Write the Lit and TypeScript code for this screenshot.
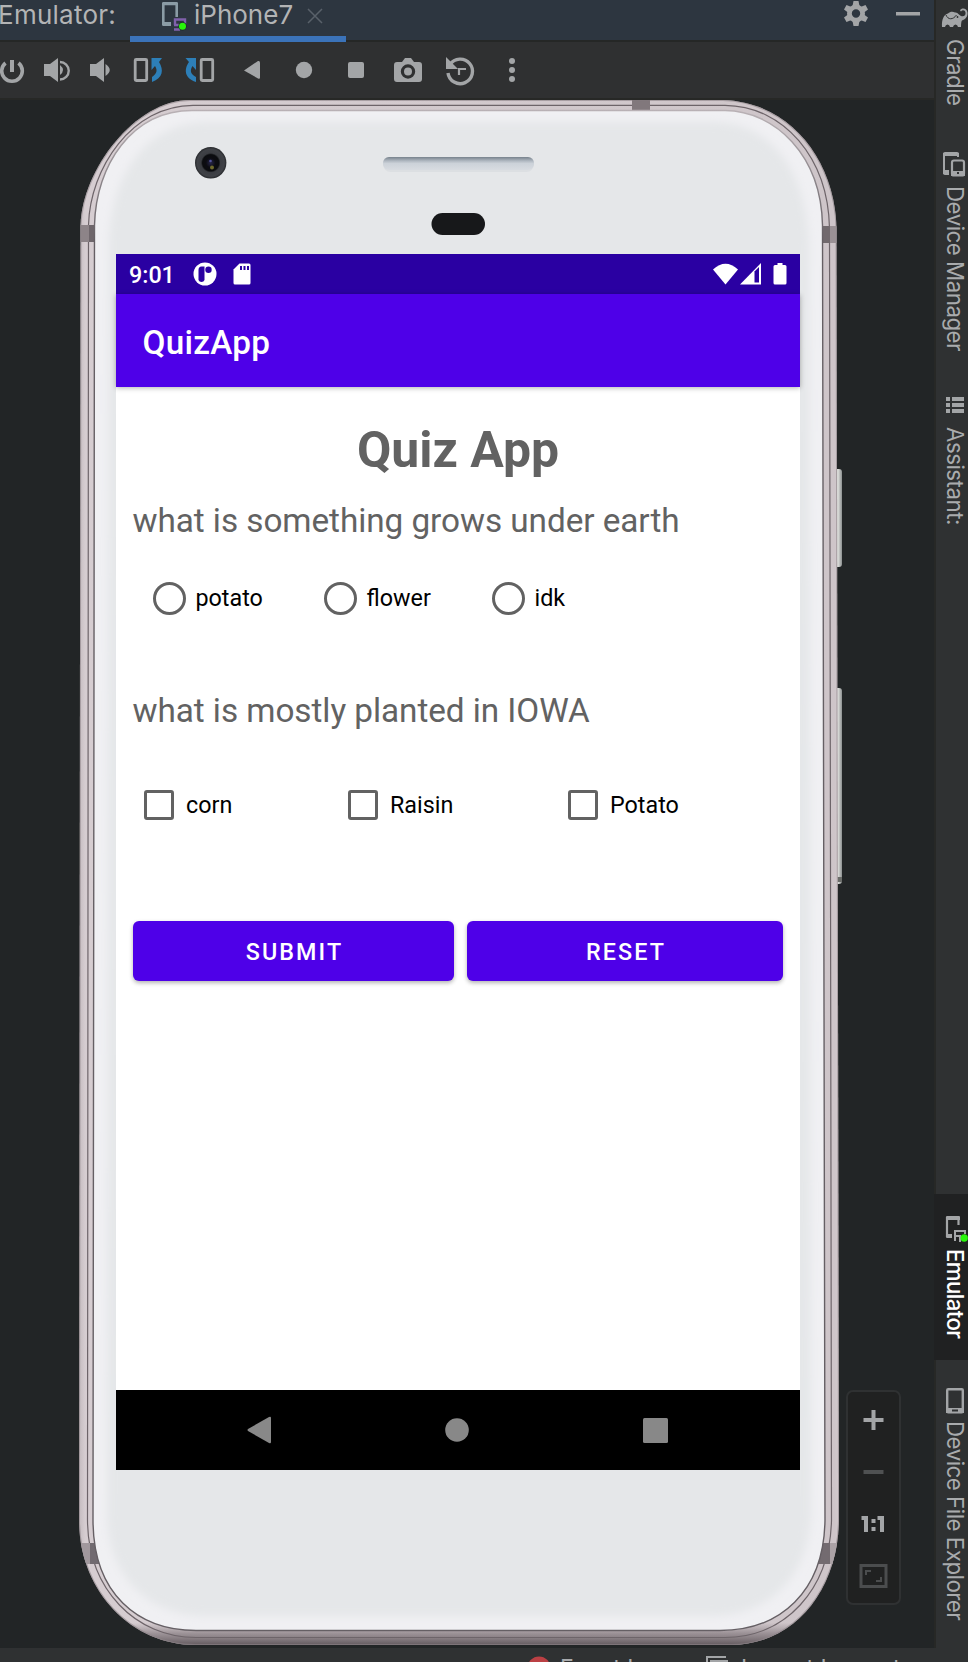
import { LitElement, html, css, svg } from "lit";
import { customElement } from "lit/decorators.js";

const glyph = (w: number, h: number, body: unknown) => html`<svg class="glyph" width=${w} height=${h} viewBox="0 0 ${w} ${h}">${body}</svg>`;

const BODY = "M190 100 H723 C790 102 835 160 836.500 228 L839 1490 V1520 C838 1590 795 1645 730 1645 H196 C130 1645 79 1590 79 1520 V1480 L80.500 225 C82 170 135 100 190 100 Z";
const FACE = "M192 110.500 H725 C775 111 821 155 822.500 225 L825 1520 C824 1592 780 1630.500 720 1630.500 H196 C138 1630.500 93 1594 93 1520 L94.500 225 C96 165 132 110.500 192 110.500 Z";

@customElement("phone-shell")
export class PhoneShell extends LitElement {
  static styles = css`
    :host { display: block; }
    svg { display: block; }
  `;
  render() {
    return html`<svg width="770" height="1550" viewBox="76 96 770 1550">
      <defs>
        <linearGradient id="side" x1="0" x2="1" y1="0" y2="0">
          <stop offset="0" stop-color="#a2989d"/><stop offset=".006" stop-color="#c9c0c4"/><stop offset=".012" stop-color="#d6cdd1"/>
          <stop offset=".985" stop-color="#cec5c9"/><stop offset=".993" stop-color="#d4cbce"/><stop offset="1" stop-color="#a0969b"/>
        </linearGradient>
        <linearGradient id="low" x1="0" x2="0" y1="0" y2="1">
          <stop offset="0" stop-color="#8f858a" stop-opacity=".5"/><stop offset=".004" stop-color="#cfc6ca" stop-opacity="0"/>
          <stop offset=".985" stop-color="#8a7f84" stop-opacity="0"/><stop offset=".992" stop-color="#83797e" stop-opacity=".7"/><stop offset="1" stop-color="#5d5459"/>
        </linearGradient>
        <linearGradient id="rim" gradientUnits="userSpaceOnUse" x1="0" x2="0" y1="110" y2="240">
          <stop offset="0" stop-color="#b9b1b5"/><stop offset=".2" stop-color="#a9a2a6"/><stop offset="1" stop-color="#655f64"/>
        </linearGradient>
        <linearGradient id="slot" x1="0" x2="0" y1="0" y2="1">
          <stop offset="0" stop-color="#77828c"/><stop offset=".3" stop-color="#b0b8c1"/><stop offset=".5" stop-color="#ccd2d9"/><stop offset="1" stop-color="#d8dce1"/>
        </linearGradient>
        <linearGradient id="key" x1="0" x2="1" y1="0" y2="0">
          <stop offset="0" stop-color="#a2a4a4"/><stop offset=".5" stop-color="#dedfdc"/><stop offset="1" stop-color="#8c9090"/>
        </linearGradient>
        <radialGradient id="lens"><stop offset="0" stop-color="#27264a"/><stop offset=".3" stop-color="#0c0c12"/><stop offset=".52" stop-color="#0b0c0f"/><stop offset=".62" stop-color="#3b3d42"/><stop offset=".86" stop-color="#404247"/><stop offset="1" stop-color="#26282b"/></radialGradient>
        <clipPath id="body"><path d=${BODY}/></clipPath>
        <clipPath id="face"><path d=${FACE}/></clipPath>
        <filter id="soft" x="-5%" y="-5%" width="110%" height="110%"><feGaussianBlur stdDeviation="4"/></filter>
      </defs>
      <rect x="834" y="469" width="8" height="98" rx="3" fill="url(#key)"/>
      <rect x="834" y="688" width="8" height="196" rx="3" fill="url(#key)"/>
      <rect x="836" y="877" width="6" height="5" fill="#6a6c69"/>
      <g clip-path="url(#body)">
        <rect x="76" y="96" width="770" height="1550" fill="url(#side)"/>
        <rect x="76" y="96" width="770" height="1550" fill="url(#low)"/>
        <path d=${BODY} fill="none" stroke="#8d8388" stroke-width="2" opacity=".6"/>
        <path d="M193 105.300 H725 C784 106 828 158 829.500 228 L831.500 1520 C830 1590 785 1637.500 725 1637.500 H196 C136 1637.500 88 1590 87.500 1520 L88.500 225 C90 168 132 105.300 193 105.300 Z" fill="none" stroke="#6d6469" stroke-width="1.200"/>
        <rect x="76" y="225" width="20" height="17" fill="#8d8488"/>
        <rect x="89" y="225" width="7" height="17" fill="#6e666b"/>
        <rect x="822" y="226" width="18" height="17" fill="#9a9195"/>
        <rect x="822" y="226" width="8" height="17" fill="#71696d"/>
        <rect x="632" y="98" width="18" height="12" fill="#81787c"/>
        <rect x="76" y="1543" width="24" height="21" fill="#a1989d"/>
        <rect x="90" y="1543" width="10" height="21" fill="#716a70"/>
        <rect x="818" y="1543" width="24" height="21" fill="#aba2a6"/>
        <rect x="818" y="1543" width="12" height="21" fill="#736b70"/>
      </g>
      <path d=${FACE} fill="#f0f0f3" stroke="url(#rim)" stroke-width="1.400"/>
      <g clip-path="url(#face)">
        <path d="M205 122 H715 C775 124 807 175 809 245 L811 1515 C808 1578 768 1616 712 1616 H205 C150 1616 108 1578 107 1515 L109 240 C112 175 145 124 205 122 Z" fill="#e5e7e9" filter="url(#soft)"/>
      </g>
      <circle cx="210.700" cy="162.800" r="15.700" fill="url(#lens)"/>
      <circle cx="212" cy="167.500" r="2" fill="#6e6a2c"/>
      <circle cx="210.500" cy="161" r="1.300" fill="#53549a"/>
      <rect x="383" y="157" width="151" height="15" rx="7.500" fill="#dcdfe2"/>
      <rect x="383" y="157" width="151" height="13" rx="6" fill="url(#slot)"/>
      <rect x="431.500" y="213" width="53.500" height="22" rx="11" fill="#17181a"/>
    </svg>`;
  }
}

@customElement("quiz-screen")
export class QuizScreen extends LitElement {
  static styles = css`
    :host { display: flex; flex-direction: column; width: 684px; height: 1216px; background: #fff; font-family: Roboto, sans-serif; color: #000; }
    .status { display: flex; align-items: center; height: 40px; background: #2a00a2; color: #fff; padding: 0 13px 0 13px; box-sizing: border-box; }
    .time { font-size: 23.300px; font-weight: 500; width: 64px; padding-top: 2px; }
    .glyph { display: block; flex: none; }
    .grow { flex: 1; }
    .sd { margin-left: 16px; }
    .wifi { margin-right: 2px; }
    .cell { margin-right: 12px; }
    .bar { display: flex; align-items: center; height: 93px; padding: 3px 26.500px 0; box-sizing: border-box; background: #4e00e8; color: #fff; font-size: 33.300px; letter-spacing: .250px; font-weight: 500; box-shadow: 0 1px 5px rgba(0,0,0,.3); }
    .page { flex: 1; display: flex; flex-direction: column; padding: 0 17px; }
    .title { margin-top: 34px; height: 58px; line-height: 58px; text-align: center; font-size: 49.900px; font-weight: 700; color: #626262; }
    .q { height: 40px; line-height: 40px; font-size: 33.300px; letter-spacing: -.050px; margin-left: -.500px; color: #626262; white-space: nowrap; }
    .q1 { margin-top: 22px; }
    .q2 { margin-top: 73px; }
    .radios { display: flex; height: 40px; margin-top: 37px; padding-left: 19.500px; }
    .checks { display: flex; height: 40px; margin-top: 54px; padding-left: 11px; }
    .opt { display: flex; align-items: center; font-size: 23.300px; line-height: 40px; }
    .ring { width: 33px; height: 33px; box-sizing: border-box; border: 3.300px solid #626262; border-radius: 50%; margin-right: 10px; }
    .box { width: 30px; height: 30px; box-sizing: border-box; border: 3px solid #626262; border-radius: 3px; margin-right: 12px; }
    .r1 { width: 171px; } .r2 { width: 168px; }
    .c1 { width: 204px; } .c2 { width: 220px; }
    .buttons { display: grid; grid-template-columns: 321px 316px; gap: 13px; margin-top: 96px; }
    .btn { height: 60px; border: 0; padding: 2px 0 0 2px; border-radius: 6px; background: #4e00e8; color: #fff; font: 500 23.300px Roboto, sans-serif; letter-spacing: 2.080px; box-shadow: 0 2px 4px rgba(0,0,0,.3); }
    .nav { height: 80px; background: #000; display: flex; align-items: center; padding: 0 132px 0 131px; justify-content: space-between; }
  `;
  render() {
    return html`
      <div class="status">
        <span class="time">9:01</span>
        ${glyph(24, 24, svg`<circle cx="12" cy="12" r="11.500" fill="#fff"/><path d="M8.500 4.500H11.500V18A3.200 3.200 0 0 1 5.500 18V8Q5.500 4.500 8.500 4.500Z" fill="#2a00a2"/><circle cx="15.500" cy="7.800" r="3.200" fill="#2a00a2"/>`)}
        <span class="sd">${glyph(18, 22, svg`<path d="M6.500 .5H16Q17.500 .5 17.500 2V20Q17.500 21.500 16 21.500H2Q.5 21.500 .5 20V6.500Z" fill="#fff"/><path d="M7 3h2v4H7zM10.500 3h2v4h-2zM14 3h2v4h-2z" fill="#2a00a2"/>`)}</span>
        <span class="grow"></span>
        <span class="wifi">${glyph(25, 22, svg`<path d="M0 6.500Q12.500-5 25 6.500L12.500 21.500Z" fill="#fff"/>`)}</span>
        <span class="cell">${glyph(21, 22, svg`<path d="M21 0V21.500H0Z" fill="#fff"/><path d="M14.500 8.500L19 4V19.500H14.500Z" fill="#2a00a2"/>`)}</span>
        ${glyph(14, 22, svg`<path d="M4.500 0H9.500V2H12Q13.500 2 13.500 3.500V20Q13.500 21.500 12 21.500H2Q.5 21.500 .5 20V3.500Q.5 2 2 2H4.500Z" fill="#fff"/>`)}
      </div>
      <div class="bar">QuizApp</div>
      <div class="page">
        <div class="title">Quiz App</div>
        <div class="q q1">what is something grows under earth</div>
        <div class="radios">
          <label class="opt r1"><span class="ring"></span>potato</label>
          <label class="opt r2"><span class="ring"></span>flower</label>
          <label class="opt"><span class="ring"></span>idk</label>
        </div>
        <div class="q q2">what is mostly planted in IOWA</div>
        <div class="checks">
          <label class="opt c1"><span class="box"></span>corn</label>
          <label class="opt c2"><span class="box"></span>Raisin</label>
          <label class="opt"><span class="box"></span>Potato</label>
        </div>
        <div class="buttons"><button class="btn">SUBMIT</button><button class="btn">RESET</button></div>
      </div>
      <div class="nav">
        ${glyph(24, 28, svg`<path d="M22 1Q24 0 24 2V26Q24 28 22 27L1 15Q0 14 1 13Z" fill="#888"/>`)}
        ${glyph(24, 24, svg`<circle cx="12" cy="12" r="11.800" fill="#888"/>`)}
        ${glyph(25, 25, svg`<rect width="25" height="25" rx="1.500" fill="#888"/>`)}
      </div>`;
  }
}

@customElement("app-root")
export class AppRoot extends LitElement {
  static styles = css`
    :host { display: grid; grid-template-columns: 934px 34px; grid-template-rows: 1648px 14px; width: 968px; height: 1662px; overflow: hidden; background: #2f3132; font-family: Inter, sans-serif; color: #a9abad; }
    .glyph { display: block; flex: none; }
    .main { display: flex; flex-direction: column; background: #222526; overflow: hidden; }
    .head { display: flex; height: 42px; box-sizing: border-box; background: #2d3640; border-bottom: 2px solid #252726; font-size: 26px; color: #b3b4b5; }
    .name { width: 132px; height: 30px; line-height: 30px; margin-left: -2px; letter-spacing: .250px; }
    .tab { width: 216px; height: 42px; box-sizing: border-box; display: flex; padding-left: 32px; border-bottom: 6px solid #3b73b9; line-height: 30px; }
    .label { width: 113px; margin-left: 7px; white-space: nowrap; }
    .close { padding-top: 8px; }
    .grow { flex: 1; }
    .gear { padding-top: 1px; margin-right: 28px; }
    .minus { padding-top: 12px; margin-right: 14px; }
    .tools { height: 58px; box-sizing: border-box; background: #2f3031; border-bottom: 2px solid #272826; display: flex; align-items: flex-start; }
    .stage { flex: 1; display: grid; grid-template-columns: 846px 55px; }
    .device { display: grid; padding-left: 76px; }
    .device > * { grid-area: 1 / 1; }
    .shell { margin-top: -4px; }
    .screen { margin: 154px 0 0 40px; }
    .zoom { width: 55px; height: 215px; box-sizing: border-box; border: 2px solid #2f3132; border-radius: 7px; background: #202121; margin-top: 1290px; }
    .rail { background: #2f3132; border-left: 2px solid #272826; display: flex; flex-direction: column; }
    .item { display: flex; flex-direction: column; align-items: flex-start; padding-left: 5px; box-sizing: border-box; }
    .side { writing-mode: vertical-rl; font-size: 22.300px; letter-spacing: -.500px; line-height: 26px; white-space: nowrap; margin-left: 1px; }
    .i1 { height: 151px; padding-top: 6px; } .i1 .side { margin-top: 9px; }
    .i2 { height: 244px; } .i2 .side { margin-top: 7px; }
    .i3 { height: 799px; } .i3 .side { margin-top: 12px; }
    .i4 { height: 166px; padding-top: 20px; margin-left: -2px; padding-left: 7px; background: #202122; color: #fff; } .i4 .side { margin-top: 7px; font-weight: 500; letter-spacing: -.650px; }
    .i5 { flex: 1; padding-top: 27px; } .i5 .side { margin-top: 6px; }
    .foot { grid-column: 1 / 3; display: flex; box-sizing: border-box; padding: 8px 0 0 527px; font-size: 23px; line-height: 24px; overflow: hidden; }
    .foot span { white-space: nowrap; }
    .ev { width: 146px; margin-left: 9px; }
    .li { margin-left: 11px; }
  `;

  private toolbar() {
    return glyph(540, 56, svg`
      <g fill="none" stroke="#a3a5a7">
        <path d="M5.500 21A10.300 10.300 0 1 0 18.500 21" stroke-width="3.600"/><path d="M12 18V30" stroke-width="4"/>
        <path d="M60 20A8.600 8.600 0 0 1 60 37.500" stroke-width="2.400"/>
        <rect x="135.200" y="17.500" width="11.500" height="21" rx="1" stroke-width="2.800"/>
        <rect x="201.200" y="17.500" width="11.500" height="21" rx="1" stroke-width="2.800"/>
        <path d="M450 22.500A12.300 12.300 0 1 1 448 31" stroke-width="3.400"/><path d="M466 27H459V33" stroke-width="2.200"/>
      </g>
      <g fill="#a3a5a7">
        <path d="M44 22H50L58 16V40L50 34H44ZM60 23Q66 28 60 33Z"/>
        <path d="M90 22H96L104 16V40L96 34H90ZM105.500 22Q114 28 105.500 34Z"/>
        <path d="M258 19Q260 18.500 260 20.500V35.500Q260 37.500 258 36.500L244 28.500Z"/>
        <circle cx="304" cy="28" r="8.200"/><rect x="348" y="20" width="16" height="16" rx="2"/>
        <path d="M397 20H402L405 16H411L414 20H419Q422 20 422 23V37Q422 40 419 40H397Q394 40 394 37V23Q394 20 397 20Z"/>
        <path d="M446 15L446 27L458 27Z"/>
        <circle cx="512" cy="19" r="3"/><circle cx="512" cy="28" r="3"/><circle cx="512" cy="37" r="3"/>
      </g>
      <circle cx="408" cy="29.500" r="5.600" fill="none" stroke="#2f3031" stroke-width="3.200"/>
      <g fill="#2d7fb8"><path d="M151.500 16H162L159 20C164 28 163 36 152 40V35C158 31 157 27 155 24L151.500 28Z"/><path d="M185.500 16H196V28L192.500 24C190 28 190 32 196 35V40C184 36 184 27 189 20Z"/></g>`);
  }

  private zoomPanel() {
    return glyph(51, 211, svg`
      <path d="M25.500 18V38M15.500 28H35.500" stroke="#a3a5a7" stroke-width="4"/>
      <path d="M15.500 80H35.500" stroke="#4f5152" stroke-width="4"/>
      <g fill="#a3a5a7"><path d="M13.500 124H20V140H16V128H13.500ZM29.500 124H36V140H32V128H29.500ZM23.500 127H27.500V131H23.500ZM23.500 135H27.500V139H23.500Z"/></g>
      <rect x="13" y="173.500" width="25" height="21" fill="none" stroke="#4b4d4e" stroke-width="3"/>
      <path d="M18 183V179H23M33 185V189H28" fill="none" stroke="#4b4d4e" stroke-width="2"/>`);
  }

  render() {
    return html`
      <div class="main">
        <div class="head">
          <div class="name">Emulator:</div>
          <div class="tab">
            ${glyph(25, 32, svg`<path d="M14.700 17V4H1.300V24H9" fill="none" stroke="#8b9ca6" stroke-width="2.600"/><path d="M1 2h14l1 1v2H0V3zM0 22h9v4H1L0 25z" fill="#8b9ca6"/><path d="M13 25V19.500H23V24M12 29.500H18M12 25H18" fill="none" stroke="#8061ab" stroke-width="2.400"/><circle cx="20.500" cy="26.200" r="4.200" fill="#1d2a2a"/><circle cx="20.500" cy="26.200" r="3.500" fill="#29f50b"/>`)}
            <span class="label">iPhone7</span>
            <span class="close">${glyph(17, 17, svg`<path d="M1 1L15 15M15 1L1 15" stroke="#59616a" stroke-width="1.500"/>`)}</span>
          </div>
          <span class="grow"></span>
          <span class="gear">${glyph(24, 26, svg`<g fill="#a3a5a7"><path fill-rule="evenodd" d="M12 3.500A9 9 0 1 0 12 21.500A9 9 0 1 0 12 3.500ZM12 8.300A4.200 4.200 0 1 1 12 16.700A4.200 4.200 0 1 1 12 8.300Z"/><path d="M9.500 0H14.500L15.500 5H8.500ZM9.500 25H14.500L15.500 20H8.500ZM0 8.500L2.500 4L7.500 6L4 11.500ZM24 8.500L21.500 4L16.500 6L20 11.500ZM0 16.500L2.500 21L7.500 19L4 13.500ZM24 16.500L21.500 21L16.500 19L20 13.500Z"/></g>`)}</span>
          <span class="minus">${glyph(24, 4, svg`<rect width="24" height="3.500" fill="#a3a5a7"/>`)}</span>
        </div>
        <div class="tools">${this.toolbar()}</div>
        <div class="stage">
          <div class="device"><phone-shell class="shell"></phone-shell><quiz-screen class="screen"></quiz-screen></div>
          <div class="zoom">${this.zoomPanel()}</div>
        </div>
      </div>
      <div class="rail">
        <div class="item i1">${glyph(27, 24, svg`<path d="M1 21C.5 13 3 8.500 7 7.500C9 5.500 12 5.500 14 6.500C17 6.500 18 9 20 10C23 11 25 9 24.500 6.500C24 4 21.500 3.500 20 5.500L19 4.500C20.500 1.500 26 2 26.500 6.500C27 11 24 13.500 21 14.500Q20 15.500 20 21H17Q16.500 18.500 14.500 18.500Q12.500 18.500 12 21H9Q8.500 18.500 6.500 18.500Q4.500 18.500 4 21Z" fill="#a3a5a7"/><path d="M5 9C7 14 12 14 15.500 9" stroke="#2f3132" stroke-width="1" fill="none"/><circle cx="16.500" cy="11" r=".9" fill="#2f3132"/>`)}<span class="side">Gradle</span></div>
        <div class="item i2">${glyph(26, 28, svg`<path d="M17 6V3H3V22H8" fill="none" stroke="#a3a5a7" stroke-width="2"/><path d="M2 3Q2 1 4 1H16Q18 1 18 3V5H2ZM2 19H8V24H4Q2 24 2 22Z" fill="#a3a5a7"/><rect x="11" y="9.500" width="12" height="15" rx="2" fill="none" stroke="#a3a5a7" stroke-width="2.200"/><path d="M10 20H24V25H10Z" fill="#a3a5a7"/><path d="M16 21h2v2h-2z" fill="#2f3132"/>`)}<span class="side">Device Manager</span></div>
        <div class="item i3">${glyph(26, 20, svg`<path d="M5 2h4v4H5zM5 8h4v4H5zM5 14h4v4H5zM11 2h12v4H11zM11 8h12v4H11zM11 14h12v4H11z" fill="#a3a5a7"/>`)}<span class="side">Assistant:</span></div>
        <div class="item i4">${glyph(27, 28, svg`<path d="M17.500 11V4H6V22H11" fill="none" stroke="#a3a5a7" stroke-width="2.200"/><path d="M5 3Q5 2 6 2H18Q19 2 19 3V6H5ZM5 20H11V24H6Q5 24 5 23Z" fill="#a3a5a7"/><path d="M14 22V17H24V20M14 27V22H19V28" fill="none" stroke="#a3a5a7" stroke-width="2"/><circle cx="23.200" cy="24" r="3.700" fill="#29f50b"/>`)}<span class="side">Emulator</span></div>
        <div class="item i5">${glyph(26, 28, svg`<rect x="6.200" y="2.300" width="15.600" height="23" rx="1" fill="none" stroke="#a3a5a7" stroke-width="2.400"/><path d="M5 21H23V26H5Z" fill="#a3a5a7"/><path d="M11 22.500h6v2h-6z" fill="#2f3132"/>`)}<span class="side">Device File Explorer</span></div>
      </div>
      <div class="foot">
        ${glyph(24, 24, svg`<circle cx="12" cy="12" r="11.500" fill="#bb4044"/>`)}
        <span class="ev">Event Log</span>
        ${glyph(24, 20, svg`<path d="M1 14V1H20" fill="none" stroke="#a3a5a7" stroke-width="2"/><path d="M4 4H22V18H4Z" fill="#a3a5a7"/>`)}
        <span class="li">Layout Inspector</span>
      </div>`;
  }
}
